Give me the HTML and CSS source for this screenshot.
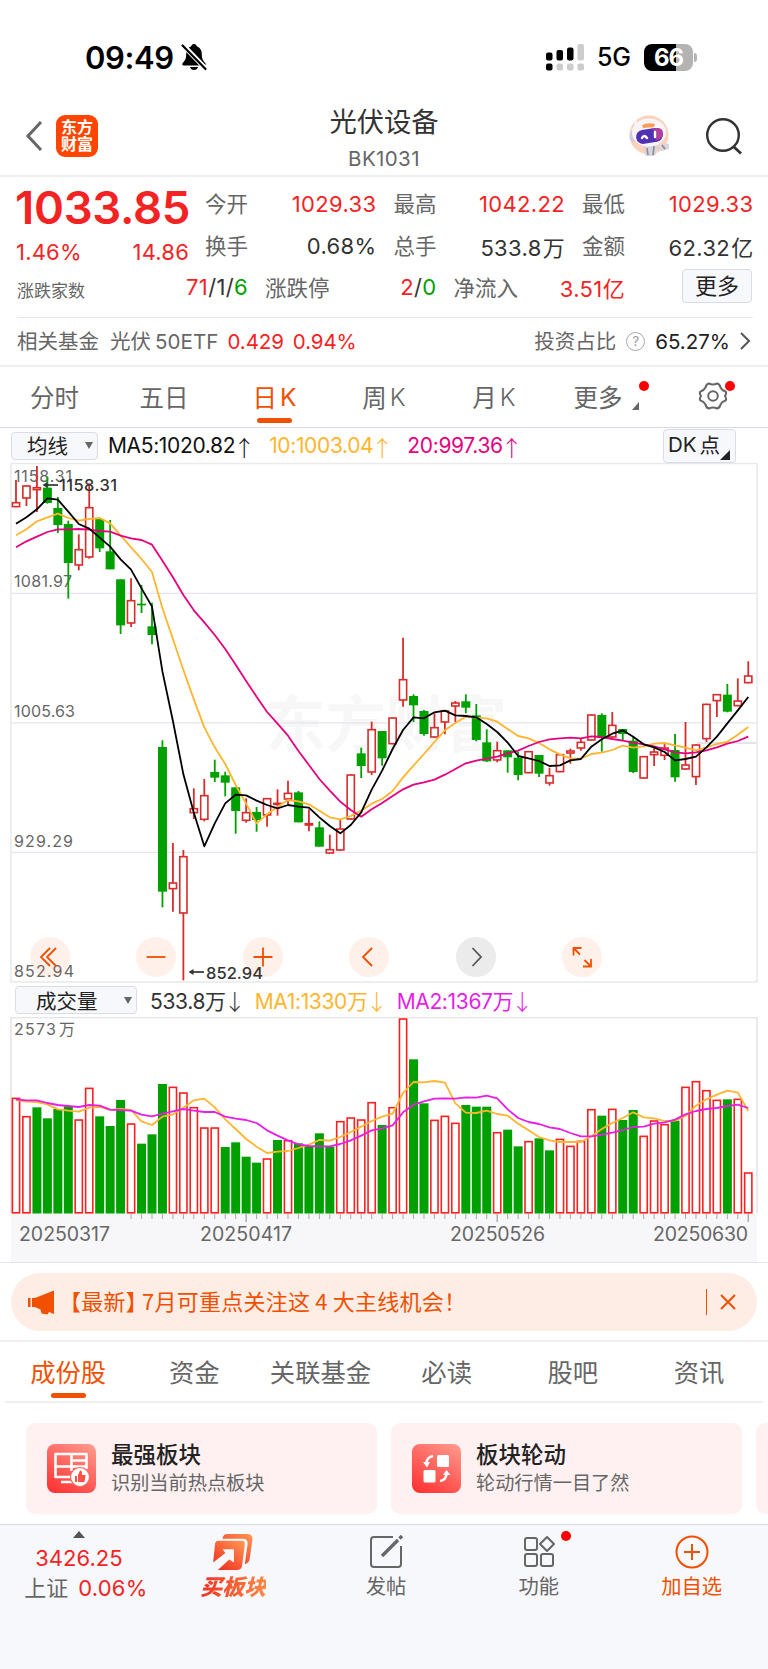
FILE: index.html
```html
<!DOCTYPE html>
<html lang="zh-CN">
<head>
    <meta charset="UTF-8">
    <meta name="viewport" content="width=device-width, initial-scale=1.0">
    <title>光伏设备 BK1031</title>
    <link rel="stylesheet" href="styles.css">
</head>
<body>
    <div class="status-bar">
        <span class="time">09:49</span>
        <svg class="bell" width="28" height="28" viewBox="0 0 28 28">
            <path d="M14 1c1.600 0 2.600 1 2.800 2.300 3.400 1.200 5 4 5 7.700 0 5.500 1.500 6.500 3.600 9.300.8 1.200.2 2.200-1.200 2.200H3.800c-1.400 0-2-1-1.200-2.200C4.700 17.500 6.200 16.500 6.200 11c0-3.700 1.600-6.500 5-7.700C11.400 2 12.400 1 14 1zM10 24h8c-.5 2-2 3-4 3s-3.500-1-4-3z"/>
            <path d="M2 1l25 26" stroke="#fff" stroke-width="5"/>
            <path d="M2.500 2.500l23 23.500" stroke="#000" stroke-width="2.200" stroke-linecap="round"/>
        </svg>
        <svg class="signal" width="39" height="27" viewBox="0 0 39 27">
            <g fill="#000">
                <rect x="0" y="8.500" width="6.500" height="8" rx="2"/>
                <rect x="10.500" y="6" width="6.500" height="10.500" rx="2"/>
                <rect x="21" y="3.500" width="6.500" height="13" rx="2"/>
                <rect x="0" y="19.500" width="6.500" height="7" rx="2"/>
            </g>
            <g fill="#ccc">
                <rect x="31.500" y="0" width="6.500" height="16.500" rx="2"/>
                <rect x="10.500" y="19.500" width="6.500" height="7" rx="2"/>
                <rect x="21" y="19.500" width="6.500" height="7" rx="2"/>
                <rect x="31.500" y="19.500" width="6.500" height="7" rx="2"/>
            </g>
        </svg>
        <span class="network">5G</span>
        <span class="battery">66</span>
        <span class="battery-tip"></span>
    </div>

    <header class="header">
        <div class="header-left">
            <svg width="18" height="32" viewBox="0 0 18 32"><path d="M16 2L3 16l13 14" fill="none" stroke="#666" stroke-width="3"/></svg>
            <div class="logo"><span>东方</span><span>财富</span></div>
        </div>
        <div class="header-title">
            <h1>光伏设备</h1>
            <p>BK1031</p>
        </div>
        <div class="header-right">
            <svg width="42" height="42" viewBox="0 0 42 42">
                <circle cx="20" cy="20" r="19.500" fill="#fdd2bb"/>
                <path d="M15 28h10l3 2 3 2 4-4 5 1v5l-7 2-6-2v5l-2 2h-8l-2-3z" fill="#d7d6dc"/>
                <path d="M18 33l1 7M25 31l-1 9M33 30l3 4" stroke="#8d8a96" stroke-width="1.600"/>
                <ellipse cx="4" cy="21" rx="3.500" ry="6" fill="#cfccdb"/>
                <ellipse cx="20" cy="17.500" rx="17" ry="14" fill="#f6f5f9"/>
                <path d="M3 7l5-3-1 6z" fill="#f6f5f9"/>
                <path d="M13 10q6-3 13-1l-1 3-11 1z" fill="#ff9b55"/>
                <rect x="7" y="14" width="27" height="14" rx="7" fill="#5030b4" transform="rotate(-9 20 21)"/>
                <path d="M24 13.500q10-2 10 5 0 5-7 7z" fill="#b0409e"/>
                <path d="M13 23q2-4 5 0M26 17v5" fill="none" stroke="#fff" stroke-width="2.400" stroke-linecap="round"/>
            </svg>
            <svg width="38" height="38" viewBox="0 0 38 38"><circle cx="18" cy="18" r="15.800" fill="none" stroke="#333" stroke-width="2.400"/><path d="M29 30l7 6.500" stroke="#333" stroke-width="2.800"/></svg>
        </div>
    </header>

    <section class="quote">
        <div class="quote-top">
            <div class="price-box">
                <div class="price">1033.85</div>
                <div class="change"><span>1.46%</span><span>14.86</span></div>
            </div>
            <div class="stats">
                <div class="stat"><label>今开</label><b class="red">1029.33</b></div>
                <div class="stat"><label>最高</label><b class="red">1042.22</b></div>
                <div class="stat"><label>最低</label><b class="red">1029.33</b></div>
                <div class="stat"><label>换手</label><b>0.68%</b></div>
                <div class="stat"><label>总手</label><b>533.8<i>万</i></b></div>
                <div class="stat"><label>金额</label><b>62.32<i>亿</i></b></div>
            </div>
        </div>
        <div class="quote-bottom">
            <div class="stat first"><label>涨跌家数</label><b><em class="red">71</em>/1/<em class="green">6</em></b></div>
            <div class="stat"><label>涨跌停</label><b><em class="red">2</em>/<em class="green">0</em></b></div>
            <div class="stat"><label>净流入</label><b class="red">3.51亿</b></div>
            <button class="more-btn">更多</button>
        </div>
    </section>

    <section class="fund">
        <span class="fund-label">相关基金</span>
        <span class="fund-name">光伏<i>50ETF</i></span>
        <span class="red fund-num">0.429</span>
        <span class="red fund-num">0.94%</span>
        <span class="fund-ratio">投资占比</span>
        <span class="help">?</span>
        <span class="fund-percent">65.27%</span>
        <svg width="12" height="18" viewBox="0 0 12 18"><path d="M2 1l8 8-8 8" fill="none" stroke="#555" stroke-width="2"/></svg>
    </section>

    <nav class="periods">
        <a>分时</a>
        <a>五日</a>
        <a class="active">日<i>K</i></a>
        <a>周<i>K</i></a>
        <a>月<i>K</i></a>
        <a class="more">更多<span class="corner"></span><span class="dot"></span></a>
        <a class="gear">
            <svg width="30" height="30" viewBox="0 0 30 30" fill="none" stroke="#666" stroke-width="2">
                <path d="M11 2.500Q15 4.500 19 2.500Q22 3.200 22.500 6.500Q24 9.500 27.500 10.500Q29 12 27 15Q29 18 27.500 19.500Q24 20.500 22.500 23.500Q22 26.800 19 27.500Q15 25.500 11 27.500Q8 26.800 7.500 23.500Q6 20.500 2.500 19.500Q1 18 3 15Q1 12 2.500 10.500Q6 9.500 7.500 6.500Q8 3.200 11 2.500Z" stroke-linejoin="round"/>
                <circle cx="15" cy="15" r="4.800"/>
            </svg>
            <span class="dot"></span>
        </a>
    </nav>

    <div class="indicator">
        <div class="select">均线<span class="caret"></span></div>
        <span class="ma ma5">MA5:1020.82<i>↑</i></span>
        <span class="ma ma10">10:1003.04<i>↑</i></span>
        <span class="ma ma20">20:997.36<i>↑</i></span>
        <div class="dk">DK<span>点</span></div>
    </div>

    <div class="chart">
        <svg id="price-chart" width="768" height="520" viewBox="0 463 768 520"></svg>
        <div class="chart-tools">
            <button><svg viewBox="0 0 40 40"><path d="M20 11l-9 9 9 9M26 11l-9 9 9 9"/></svg></button>
            <button><svg viewBox="0 0 40 40"><path d="M10.500 20h19"/></svg></button>
            <button><svg viewBox="0 0 40 40"><path d="M10.500 20h19M20 10.500v19"/></svg></button>
            <button><svg viewBox="0 0 40 40"><path d="M23 11l-9 9 9 9"/></svg></button>
            <button class="grey"><svg viewBox="0 0 40 40"><path d="M16.500 11l8.500 9-8.500 9"/></svg></button>
            <button><svg viewBox="0 0 40 40"><path d="M11.500 18.500v-7.500h8M11.500 11l6.500 6.500M29 22v7.500h-8M29 29.500l-6.500-6.500"/></svg></button>
        </div>
    </div>

    <div class="indicator volume">
        <div class="select wide">成交量<span class="caret"></span></div>
        <span class="ma vol">533.8万<i>↓</i></span>
        <span class="ma ma10">MA1:1330万<i>↓</i></span>
        <span class="ma ma2">MA2:1367万<i>↓</i></span>
    </div>

    <div class="chart volume-chart">
        <svg id="volume-chart" width="768" height="245" viewBox="0 1017 768 245"></svg>
    </div>

    <div class="notice-wrap">
        <div class="notice">
            <svg width="27" height="25" viewBox="0 0 27 25" fill="#f05000"><path d="M0 8h2.500v9H0zM4 8h3L26 0.500V24l-5-2-1.500 2.500-6-1-1-4L7 17H4z"/></svg>
            <span class="notice-text">【最新<em>】</em>7月可重点关注这<i>4</i>大主线机会！</span>
            <span class="notice-line"></span>
            <svg width="16" height="16" viewBox="0 0 16 16"><path d="M1 1l14 14M15 1L1 15" stroke="#f05000" stroke-width="2"/></svg>
        </div>
    </div>

    <nav class="tabs">
        <a class="active">成份股</a>
        <a>资金</a>
        <a>关联基金</a>
        <a>必读</a>
        <a>股吧</a>
        <a>资讯</a>
    </nav>

    <section class="cards">
        <div class="card">
            <svg width="49" height="49" viewBox="0 0 49 49">
                <defs><linearGradient id="red-grad" x1="0.800" y1="0" x2="0.200" y2="1"><stop offset="0" stop-color="#ff9488"/><stop offset="1" stop-color="#ff3535"/></linearGradient></defs>
                <rect width="49" height="49" rx="8" fill="url(#red-grad)"/>
                <g fill="none" stroke="#fff" stroke-width="2.600">
                    <path d="M8.500 10h31v15M8.500 9v24H24M8 22.500h31M24.500 10v17M24 16.500h15M14 38h12" stroke-linejoin="round"/>
                </g>
                <circle cx="33" cy="33" r="9.500" fill="#fff" stroke="#ff6a60" stroke-width="1.200"/>
                <path d="M28 32h2v6h-2zM31 31l2-4.500q2 0 2 2v2.500h3.500l-1 7H31z" fill="#ff5148"/>
            </svg>
            <div>
                <h3>最强板块</h3>
                <p>识别当前热点板块</p>
            </div>
        </div>
        <div class="card">
            <svg width="49" height="49" viewBox="0 0 49 49">
                <rect width="49" height="49" rx="8" fill="url(#red-grad)"/>
                <g fill="#fff"><rect x="25" y="11" width="12" height="12" rx="1.500"/><rect x="11.500" y="26" width="12" height="12.500" rx="1.500"/><path d="M11 18h7l-3 5.500zM31 31l3.500-5 4 5z"/></g>
                <path d="M21 12q-6 1-6.500 7M28 37q6-1 6.500-7" fill="none" stroke="#fff" stroke-width="2.600"/>
            </svg>
            <div>
                <h3>板块轮动</h3>
                <p>轮动行情一目了然</p>
            </div>
        </div>
        <div class="card"></div>
    </section>

    <footer class="footer">
        <div class="index">
            <span class="up"></span>
            <span class="red index-value">3426.25</span>
            <span class="index-name">上证<b class="red">0.06%</b></span>
        </div>
        <a class="buy">
            <svg width="42" height="38" viewBox="0 0 42 38">
                <defs><linearGradient id="buy-grad" x1="1" y1="0" x2="0.200" y2="1"><stop offset="0" stop-color="#ff9a55"/><stop offset="1" stop-color="#f03020"/></linearGradient></defs>
                <path d="M10 4q1-4 5-4h21q6 0 5.500 6l-3 21q-1 4-5 5l3-22q0-5-5-5H10z" fill="url(#buy-grad)"/>
                <path d="M6 7h24q4 0 3.500 4l-3 23q-1 4-5 4H5l12-11 5 3V16H10l3 4-13 10L2 11q0-4 4-4z" fill="url(#buy-grad)"/>
            </svg>
            <span>买板块</span>
        </a>
        <a>
            <svg width="34" height="34" viewBox="0 0 34 34" fill="none" stroke="#666" stroke-width="2"><path d="M24 2H5Q2 2 2 5v24q0 3 3 3h24q3 0 3-3V11"/><path d="M13 21L29 5" stroke-width="3.400"/><path d="M30.500 3.500L33 1" stroke-width="3.400"/></svg>
            <span>发帖</span>
        </a>
        <a class="func">
            <svg width="32" height="32" viewBox="0 0 32 32" fill="none" stroke="#666" stroke-width="2"><rect x="2" y="2" width="12" height="12" rx="2"/><rect x="2" y="18" width="12" height="12" rx="2"/><rect x="18" y="18" width="12" height="12" rx="2"/><path d="M24 1l7 7-7 7-7-7z" stroke-linejoin="round"/></svg>
            <span>功能</span>
            <span class="dot"></span>
        </a>
        <a class="add">
            <svg width="34" height="34" viewBox="0 0 34 34" fill="none" stroke="#f05000" stroke-width="2"><circle cx="17" cy="17" r="15.500"/><path d="M9 17h16M17 9v16"/></svg>
            <span>加自选</span>
        </a>
    </footer>

    <script src="script.js"></script>
</body>
</html>
```
FILE: styles.css
```css
* {
    box-sizing: border-box;
}
body {
    margin: 0;
    width: 768px;
    background-color: #fff;
    color: #333;
    font-family: Inter, "Noto Sans CJK SC", sans-serif;
    overflow-x: hidden;
}
h1, h3, p {
    margin: 0;
    font-weight: 400;
}
i, em {
    font-style: normal;
}
button {
    font-family: inherit;
    padding: 0;
}
svg {
    display: block;
    flex: none;
}
.red {
    color: #f42323;
}
.green {
    color: #00a000;
}
.dot {
    position: absolute;
    width: 10px;
    height: 10px;
    border-radius: 50%;
    background-color: #f00;
}

/* status bar */
.status-bar {
    display: flex;
    align-items: center;
    height: 100px;
    padding: 14px 71px 0 85px;
    color: #000;
}
.time {
    width: 95px;
    font-size: 31px;
    font-weight: 600;
    letter-spacing: -0.4px;
}
.signal {
    margin-left: auto;
}
.network {
    margin-left: 12px;
    width: 47px;
    font-size: 25px;
    font-weight: 500;
    letter-spacing: -0.3px;
}
.battery {
    width: 49px;
    height: 27px;
    border-radius: 8px;
    background: linear-gradient(90deg, #000 66%, #b3b3b3 66%);
    color: #fff;
    font-size: 24px;
    font-weight: 700;
    line-height: 27px;
    text-align: center;
    letter-spacing: -1px;
}
.battery-tip {
    width: 3px;
    height: 9px;
    margin-left: 1px;
    border-radius: 0 3px 3px 0;
    background-color: #b3b3b3;
}

/* header */
.header {
    display: grid;
    grid-template-columns: 200px 1fr 200px;
    height: 77px;
    border-bottom: 2px solid #efeff1;
}
.header-left, .header-right {
    display: flex;
    align-items: center;
    padding-left: 25px;
    padding-bottom: 3px;
}
.header-right {
    padding-left: 61px;
    gap: 34px;
}
.logo {
    display: flex;
    flex-direction: column;
    justify-content: center;
    width: 42px;
    height: 42px;
    margin-left: 13px;
    border-radius: 9px;
    background-color: #ff4500;
    color: #fff;
    font-size: 16px;
    font-weight: 700;
    line-height: 17px;
    text-align: center;
}
.header-title {
    text-align: center;
}
.header-title h1 {
    height: 44px;
    font-size: 27.300px;
    line-height: 45px;
}
.header-title p {
    color: #666;
    font-size: 20.500px;
    line-height: 30px;
    letter-spacing: 0.4px;
}

/* quote */
.quote {
    padding: 6px 15px 0 17px;
}
.quote-top {
    display: flex;
    gap: 16px;
}
.price-box {
    width: 172px;
}
.price {
    height: 48px;
    margin-left: -2px;
    color: #f42323;
    font-size: 45.500px;
    font-weight: 600;
    line-height: 49px;
    letter-spacing: -0.3px;
}
.change {
    display: flex;
    justify-content: space-between;
    padding: 8px 0 0 0;
    color: #f42323;
    font-size: 22px;
    line-height: 26px;
    letter-spacing: 0.2px;
}
.change span:first-child {
    margin-left: -1px;
}
.stats {
    flex: 1;
    display: grid;
    grid-template-columns: repeat(3, 171.500px);
    column-gap: 17px;
}
.stat {
    display: flex;
    justify-content: space-between;
    align-items: center;
    height: 42px;
    font-size: 22px;
}
.stat label {
    padding-bottom: 3px;
    color: #666;
    font-size: 21.500px;
}
.stat b {
    font-weight: 400;
    letter-spacing: 0.35px;
}
.stat b i {
    margin-left: 1px;
}
.quote-bottom {
    display: flex;
    height: 51px;
    gap: 17px;
    border-bottom: 1px solid #e8e8ec;
}
.quote-bottom .stat {
    width: 171.500px;
}
.quote-bottom .stat b {
    padding-bottom: 2px;
}
.quote-bottom .first {
    width: 231px;
}
.quote-bottom .first label {
    padding-top: 3px;
    padding-bottom: 0;
    font-size: 17px;
}
.more-btn {
    width: 70px;
    height: 34px;
    margin: 2px 1px 0 auto;
    border: 1px solid #d9dce6;
    border-radius: 4px;
    background-color: #f7f8fb;
    color: #222;
    font-size: 22px;
    line-height: 29px;
}
.fund {
    display: flex;
    align-items: center;
    height: 49px;
    padding: 0 17px 1px;
    border-bottom: 2px solid #f0f0f2;
    color: #666;
    font-size: 20.500px;
}
.fund-label, .fund-ratio, .fund-name {
    padding-bottom: 2px;
}
.fund-name {
    margin: 0 9px 0 11px;
}
.fund-name i {
    margin-left: 4px;
    letter-spacing: 0.1px;
}
.fund-num {
    margin-right: 9px;
    font-size: 20.500px;
    letter-spacing: -0.1px;
}
.fund-ratio {
    margin-left: auto;
}
.help {
    width: 19px;
    height: 19px;
    margin: 0 10px;
    border: 1.500px solid #aaa;
    border-radius: 50%;
    color: #999;
    font-size: 13px;
    line-height: 17px;
    text-align: center;
}
.fund-percent {
    margin-right: 9px;
    color: #222;
    font-size: 20.500px;
}

/* period tabs */
.periods {
    display: grid;
    grid-template-columns: 109px 110px 111px 108px 112px 108px 110px;
    height: 61px;
    border-bottom: 1px solid #d5dae4;
}
.periods a {
    position: relative;
    display: flex;
    align-items: center;
    justify-content: center;
    padding-bottom: 2px;
    color: #666;
    font-size: 24.500px;
}
.periods i {
    margin-left: 3px;
    padding-top: 1px;
    font-size: 24.500px;
    font-weight: 300;
}
.periods .active i {
    font-weight: 400;
}
.periods .active, .tabs .active {
    color: #f05000;
}
.periods .active::after, .tabs .active::after {
    content: "";
    position: absolute;
    bottom: 4px;
    width: 35px;
    height: 5px;
    border-radius: 3px;
    background-color: #f05000;
}
.periods .more {
    padding-right: 12px;
}
.periods .more .dot {
    left: 89px;
    top: 14px;
}
.corner {
    position: absolute;
    left: 82px;
    top: 35px;
    border-left: 7px solid transparent;
    border-bottom: 8px solid #666;
}
.gear .dot {
    left: 67px;
    top: 14px;
}

/* indicator rows */
.indicator {
    display: flex;
    align-items: center;
    height: 35px;
    padding: 0 32px 0 11px;
}
.select {
    display: flex;
    align-items: center;
    justify-content: space-between;
    width: 87px;
    height: 28px;
    margin-right: 10px;
    padding: 0 4px 2px 15px;
    border: 1px solid #d9dce6;
    border-radius: 4px;
    background-color: #f7f8fb;
    color: #222;
    font-size: 20.500px;
}
.caret {
    margin-top: 2px;
    border: 4px solid transparent;
    border-top: 7px solid #666;
    border-bottom: 0;
}
.ma {
    display: flex;
    align-items: center;
    height: 30px;
    font-size: 21px;
    letter-spacing: -0.35px;
    white-space: nowrap;
}
.ma i {
    width: 18px;
    margin-right: 16px;
    font-family: "Noto Sans CJK SC", sans-serif;
    font-weight: 300;
    font-size: 22px;
    text-indent: -2px;
    text-align: center;
}
.ma5 {
    color: #111;
}
.ma10 {
    color: #ffb52e;
}
.ma20 {
    color: #e6007e;
}
.ma2 {
    color: #e61ee6;
}
.dk {
    position: relative;
    display: flex;
    align-items: center;
    width: 73px;
    height: 34px;
    margin-left: auto;
    padding: 0 0 3px 4px;
    border: 1px solid #d9dce6;
    border-radius: 4px;
    background-color: #f7f8fb;
    color: #222;
    font-size: 20.500px;
}
.dk span {
    margin-left: 3px;
}
.dk::after {
    content: "";
    position: absolute;
    right: 5px;
    bottom: 2px;
    border-left: 10px solid transparent;
    border-bottom: 10px solid #222;
}
.volume {
    height: 34px;
    padding-left: 15px;
}
.volume .wide {
    width: 122px;
    margin-right: 13px;
    padding: 0 4px 1px 20px;
}
.volume .ma i {
    margin-right: 11px;
}

/* charts */
.chart {
    position: relative;
}
.chart-tools {
    position: absolute;
    left: 30px;
    top: 474px;
    display: flex;
    gap: 66.400px;
}
.chart-tools button {
    width: 40px;
    height: 40px;
    border: none;
    border-radius: 50%;
    background-color: rgba(255, 90, 20, 0.09);
}
.chart-tools path {
    fill: none;
    stroke: #f05000;
    stroke-width: 1.800;
}
.chart-tools .grey {
    background-color: #ebebeb;
}
.chart-tools .grey path {
    stroke: #555;
}
.chart text {
    fill: #666;
    font-size: 16px;
}
.chart .mark {
    fill: #333;
    font-size: 16.500px;
    font-weight: 500;
}
.chart .watermark {
    fill: #f7f7f8;
    font-size: 61px;
    font-weight: 700;
}
.chart .date {
    font-size: 19.500px;
}
.volume-chart {
    border-bottom: 1px solid #e2e4ea;
}

/* notice */
.notice-wrap {
    padding: 10px 11px 9px;
    border-bottom: 2px solid #f0f0f2;
}
.notice {
    display: flex;
    align-items: center;
    height: 58px;
    padding: 0 21px 0 17px;
    border-radius: 29px;
    background-color: #fdede5;
    color: #f05000;
}
.notice-text {
    margin-left: 4px;
    padding-bottom: 4px;
    font-family: "Noto Sans CJK SC", sans-serif;
    font-size: 22px;
    letter-spacing: 0.25px;
}
.notice-text em {
    margin-right: -6px;
}
.notice-text i {
    margin: 0 5px;
}
.notice-line {
    width: 1px;
    height: 26px;
    margin: 0 13px 0 auto;
    background-color: #f05000;
}

/* content tabs */
.tabs {
    display: grid;
    grid-template-columns: repeat(6, 126.200px);
    height: 61px;
    margin: 0 5px;
    border-bottom: 2px solid #f0f0f2;
}
.tabs a {
    position: relative;
    display: flex;
    align-items: center;
    justify-content: center;
    padding-bottom: 2px;
    color: #666;
    font-size: 25.300px;
}
.tabs .active::after {
    bottom: 3px;
}

/* cards */
.cards {
    display: flex;
    gap: 14px;
    height: 121px;
    padding: 20px 0 10px 26px;
    overflow: hidden;
}
.card {
    display: flex;
    flex: none;
    width: 351px;
    height: 91px;
    padding: 21px;
    border-radius: 9px;
    background-color: #fff1f1;
}
.card div {
    margin-left: 15px;
}
.card h3 {
    margin-top: -4px;
    color: #222;
    font-size: 22.500px;
    font-weight: 500;
    line-height: 30px;
}
.card p {
    color: #666;
    font-size: 19.200px;
    line-height: 27px;
}

/* footer */
.footer {
    display: grid;
    grid-template-columns: repeat(5, 152.800px);
    height: 146px;
    padding: 0 4px;
    border-top: 1px solid #d5dae4;
    background-color: #f7f8fb;
}
.footer a {
    position: relative;
    display: flex;
    flex-direction: column;
    align-items: center;
    padding-top: 9px;
    color: #666;
    font-size: 20.300px;
}
.footer a svg {
    height: 36px;
}
.footer a span:not(.dot) {
    margin-top: 3px;
    line-height: 28px;
}
.index {
    display: flex;
    flex-direction: column;
    align-items: center;
    padding-top: 6px;
}
.up {
    margin-right: 3px;
    border: 6px solid transparent;
    border-top: 0;
    border-bottom: 7px solid #555;
}
.index-value {
    margin: 5px 3px 0 0;
    font-size: 22px;
    line-height: 30px;
}
.index-name {
    margin-left: 11px;
    color: #666;
    font-size: 22px;
    line-height: 30px;
}
.index-name b {
    margin-left: 10px;
    font-weight: 400;
    letter-spacing: 0.2px;
}
.footer .buy span {
    background: linear-gradient(90deg, #f03020, #ff8a45);
    -webkit-background-clip: text;
    background-clip: text;
    color: transparent;
    font-size: 22px;
    font-style: italic;
    font-weight: 900;
}
.func .dot {
    left: 99px;
    top: 6px;
}
.footer .add {
    color: #f05000;
}
```
FILE: script.js
```javascript
const STEP = 10.461;
const x = (i) => 16 + i * STEP;

// Each group: base y, then rows of [body top, body bottom, high, low, rising],
// measured in thirds of a pixel below the base.
const candles = [
    { base: 455, rows: [
        [141, 157, 75, 157, 1], [91, 131, 91, 153, 1], [96, 106, 33, 171, 1], [98, 144, 66, 146, 0],
        [159, 210, 126, 234, 0], [207, 324, 197, 431, 0], [282, 332, 238, 346, 1], [156, 308, 85, 311, 1],
        [192, 280, 190, 291, 0], [289, 343, 195, 343, 0], [373, 511, 373, 537, 0], [435, 506, 370, 516, 1],
        [446, 451, 390, 474, 0], [514, 540, 443, 568, 0]
    ] },
    { base: 715, rows: [
        [96, 530, 76, 577, 0], [502, 523, 384, 590, 1], [423, 596, 405, 796, 1], [279, 295, 220, 312, 1],
        [240, 315, 192, 319, 1], [171, 188, 134, 201, 0], [181, 203, 170, 244, 0], [217, 288, 217, 356, 0],
        [291, 318, 250, 323, 1], [291, 315, 276, 350, 0], [249, 302, 249, 335, 1], [263, 270, 223, 302, 1],
        [233, 254, 197, 268, 1], [232, 322, 228, 322, 0], [324, 332, 283, 349, 1], [337, 395, 319, 395, 0],
        [402, 416, 359, 416, 1], [340, 407, 312, 407, 1], [178, 314, 178, 314, 1], [115, 153, 98, 189, 0],
        [42, 173, 20, 180, 1], [48, 130, 48, 152, 0], [7, 88, 7, 88, 1]
    ] },
    { base: 620, rows: [
        [177, 242, 53, 260, 1], [228, 256, 223, 306, 0], [273, 342, 270, 347, 0], [321, 353, 280, 353, 1],
        [271, 308, 271, 343, 1], [247, 260, 243, 306, 1], [244, 263, 223, 280, 0], [286, 360, 252, 364, 0],
        [367, 424, 328, 426, 0], [390, 422, 365, 427, 1], [391, 412, 391, 458, 0], [413, 465, 395, 481, 0],
        [393, 460, 393, 460, 1], [405, 461, 405, 471, 0], [465, 491, 443, 497, 1], [402, 457, 402, 457, 1],
        [391, 401, 386, 431, 1]
    ] },
    { base: 640, rows: [
        [305, 326, 295, 332, 1], [223, 302, 223, 302, 1], [225, 294, 220, 335, 0], [254, 293, 216, 293, 1],
        [267, 282, 267, 300, 0], [302, 396, 290, 399, 0], [348, 416, 348, 416, 1], [334, 346, 322, 378, 1],
        [322, 348, 311, 360, 1], [330, 412, 282, 425, 0], [373, 389, 246, 389, 1], [313, 412, 313, 435, 1],
        [191, 298, 191, 306, 1], [162, 184, 162, 231, 1], [164, 215, 132, 217, 0], [181, 199, 115, 199, 1],
        [106, 130, 64, 130, 1]
    ] }
];

// Moving averages, same units as the candles
const averages = [
    { color: "#ffb52e", parts: [
        [455, [241, 223, 199, 187, 176, 189, 197, 192, 189, 205, 241, 277, 312, 351, 460, 552, 645, 733]],
        [715, [37, 97, 147, 210, 266, 325, 298, 275, 255, 259, 268, 287, 307, 313, 303, 287, 266, 252, 228]],
        [620, [472, 437, 402, 366, 331, 309, 290, 293, 295, 305, 327, 348, 355, 369, 388, 403]],
        [640, [355, 356, 342, 338, 330, 317, 323, 319, 311, 309, 316, 323, 331, 322, 312, 305, 284, 261]]
    ] },
    { color: "#e6007e", parts: [
        [455, [277, 259, 245, 231, 223, 223, 222, 224, 228, 230, 242, 250, 255, 269, 317, 367, 420, 466, 502, 540, 582, 629, 678, 725]],
        [715, [-9, 26, 62, 108, 150, 192, 227, 260, 285, 305, 283, 264, 243]],
        [620, [508, 494, 487, 479, 464, 447, 430, 422, 416, 410, 400, 392, 378, 366, 358, 355]],
        [640, [293, 295, 289, 291, 297, 302, 308, 313, 319, 328, 337, 340, 337, 331, 322, 311, 303, 290]]
    ] },
    { color: "#000", parts: [
        [455, [206, 187, 163, 130, 134, 170, 207, 221, 248, 275, 313, 344, 400, 455, 650]],
        [715, [18, 178, 293, 394, 325, 265, 239, 241, 257, 270, 280, 270, 275, 278, 307, 333, 355, 330, 292, 224, 167, 102]],
        [620, [330, 292, 295, 277, 272, 286, 288, 292, 312, 336, 368, 408, 415, 423, 438, 436, 421]],
        [640, [357, 320, 298, 281, 271, 290, 313, 322, 336, 361, 357, 350, 322, 290, 250, 211, 171]]
    ] }
];

const volumes = [
    263, 318, 292, 325, 297, 288, 328, 233, 319, 348, 270, 340, 401, 373, 222, 230, 247, 291, 352, 352,
    411, 397, 440, 458, 445, 390, 390, 400, 408, 370, 410, 333, 322, 328, 276, 345, 291, 25, 148, 280,
    329, 317, 338, 285, 290, 290, 366, 359, 409, 393, 385, 421, 386, 407, 392, 297, 317, 296, 330, 300,
    377, 331, 342, 332, 230, 213, 240, 269, 268, 266, 487
];
// Bars drawn red on the volume pane
const redVolume = new Set([0, 1, 6, 7, 11, 15, 16, 17, 18, 19, 24, 26, 31, 32, 33, 34, 36, 37, 40, 41, 42,
    46, 49, 52, 53, 54, 55, 57, 60, 61, 62, 64, 65, 66, 67, 69, 70]);

const volumeAverages = [
    { color: "#ffb52e", parts: [[1010, [
        270, 275, 276, 283, 298, 302, 305, 293, 291, 300, 297, 300, 334, 345, 320, 313, 293, 271, 266, 292,
        328, 357, 387, 410, 429, 425, 423, 414, 404, 390, 392, 381, 366, 350, 333, 320, 311, 249, 216, 217,
        213, 218, 280, 308, 309, 302, 312, 317, 341, 361, 381, 391, 396, 396, 396, 379, 357, 339, 324, 307,
        322, 325, 333, 332, 318, 287, 268, 254, 242, 248, 303]]] },
    { color: "#e61ee6", parts: [[1010, [
        268, 271, 271, 279, 285, 288, 291, 285, 287, 299, 300, 302, 314, 319, 311, 304, 297, 302, 306, 306,
        320, 326, 330, 339, 361, 377, 391, 403, 408, 409, 409, 402, 391, 377, 361, 355, 346, 307, 284, 274,
        266, 265, 266, 262, 263, 257, 265, 298, 324, 336, 342, 352, 357, 369, 379, 379, 374, 368, 360, 351,
        350, 341, 337, 329, 313, 303, 297, 294, 288, 284, 294]]] }
];

function line(x1, y1, x2, y2, color, width = 1) {
    return `<path d="M${x1} ${y1}L${x2} ${y2}" stroke="${color}" stroke-width="${width}"/>`;
}

function text(px, py, value, width, cls = "") {
    return `<text class="${cls}" x="${px}" y="${py}" textLength="${width}">${value}</text>`;
}

function bar(i, top, bottom, up, red) {
    if (up) {
        return `<rect x="${x(i) - 3.6}" y="${top + 0.7}" width="7.200" height="${Math.max(bottom - top - 1.4, 1)}" fill="#fff" stroke="${red}" stroke-width="1.600"/>`;
    }
    return `<rect x="${x(i) - 4.5}" y="${top}" width="9" height="${bottom - top}" fill="#00a000"/>`;
}

function averageLine(item) {
    const points = [];
    item.parts.forEach(([base, values]) => {
        values.forEach((v) => points.push(`${x(points.length)},${base + v / 3}`));
    });
    return `<polyline points="${points.join(" ")}" fill="none" stroke="${item.color}" stroke-width="1.800" stroke-linejoin="round"/>`;
}

function drawPrice() {
    let out = text(265, 747, "东方财富", 242, "watermark");
    [593.3, 722.8, 852.3].forEach((y) => {
        out += line(11, y, 757, y, "#e3e6ee", 1.3);
    });
    out += line(697, 743, 757, 743, "#dcdde2", 1.5);
    out += `<rect x="11" y="463.500" width="746" height="518.500" fill="none" stroke="#e8e9ec" stroke-width="1.500"/>`;
    out += text(14, 482, "1158.31", 58);
    out += text(14, 587, "1081.97", 58);
    out += text(14, 717, "1005.63", 61);
    out += text(14, 847, "929.29", 59);
    out += text(14, 976.5, "852.94", 60);

    let i = 0;
    candles.forEach((group) => {
        group.rows.forEach(([top, bottom, high, low, up]) => {
            const y = (v) => group.base + v / 3;
            const color = up ? "#d82c2c" : "#00a000";
            out += line(x(i), y(high), x(i), y(low), color, 1.8);
            out += bar(i, y(top), y(bottom), up, "#d82c2c");
            i++;
        });
    });
    out += averages.map(averageLine).join("");

    // high and low markers
    out += line(44, 485, 58, 485, "#333", 1.7) + `<path d="M42.500 485l5-3v6z" fill="#333"/>`;
    out += text(59, 491, "1158.31", 58, "mark");
    out += line(190, 972, 204, 972, "#333", 1.7) + `<path d="M188.500 972l5-3v6z" fill="#333"/>`;
    out += text(206, 978.5, "852.94", 57, "mark");
    document.getElementById("price-chart").innerHTML = out;
}

function drawVolume() {
    const bottom = 1213.5;
    let out = `<rect x="11" y="1213.500" width="746" height="49" fill="#f7f7fa"/>`;
    out += `<path d="M11 1213V1017.500H757V1213" fill="none" stroke="#e3e4e8" stroke-width="1.500"/>`;
    out += text(14, 1035, "2573", 42) + text(59, 1035, "万", 16);
    volumes.forEach((v, i) => {
        out += bar(i, 1010 + v / 3, bottom, redVolume.has(i), "#fa2020");
        if (i >= 11) {
            const major = i === 22 || i === 46 || i === 70;
            out += line(x(i), 1214, x(i), major ? 1222 : 1219, "#aaa", major ? 1.4 : 1);
        }
    });
    out += volumeAverages.map(averageLine).join("");
    out += text(19, 1241, "20250317", 91, "date");
    out += text(200, 1241, "20250417", 92, "date");
    out += text(450, 1241, "20250526", 95, "date");
    out += text(653, 1241, "20250630", 95, "date");
    document.getElementById("volume-chart").innerHTML = out;
}

drawPrice();
drawVolume();
```
